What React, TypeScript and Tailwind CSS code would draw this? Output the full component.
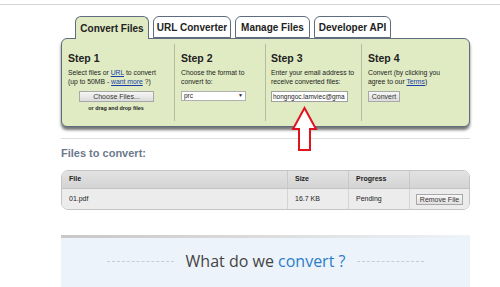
import React from "react";

const font = { fontFamily: "'Liberation Sans', Arial, sans-serif" };

function Tab({ label, active, w }: { label: string; active?: boolean; w: string }) {
  return (
    <div
      className={`${w} flex items-center justify-center rounded-t-[6px] border border-[#5d6d7e] text-[10px] font-bold text-[#222] ${
        active ? "bg-[#e0ebc3] border-b-0 relative z-10 h-[23px] -mb-[1px]" : "bg-white h-[22px]"
      }`}
    >
      {label}
    </div>
  );
}

export default function App() {
  return (
    <div className="w-[500px] h-[287px] bg-white overflow-hidden relative" style={font}>
      <div className="h-[5px] border-b border-[#d4d4d4]" />
      <div className="ml-[61px] w-[409px]">
        {/* tabs */}
        <div className="flex gap-[4px] pl-[14px] pt-[11px] items-end">
          <Tab label="Convert Files" active w="w-[74px]" />
          <Tab label="URL Converter" w="w-[78px]" />
          <Tab label="Manage Files" w="w-[75px]" />
          <Tab label="Developer API" w="w-[77px]" />
        </div>
        {/* panel */}
        <div className="h-[89px] bg-[#e0ebc3] border border-[#5d6d7e] rounded-[6px] shadow-[0_3px_3px_rgba(0,0,0,0.55)] flex py-[5px] text-[#222]">
          <div className="w-[113px] border-r border-[#b3bc9c] pl-[6px] pt-[8px]">
            <div className="text-[10.5px] font-bold leading-[12px]">Step 1</div>
            <div className="text-[6.8px] leading-[9px] mt-[4px] whitespace-nowrap">
              Select files or <span className="text-[#1a3fa8] underline">URL</span> to convert
              <br />
              (up to 50MB - <span className="text-[#1a3fa8] underline">want more</span> ?)
            </div>
            <div className="ml-[11px] mt-[5px] w-[75px] h-[11px] border border-[#a8a8a8] bg-gradient-to-b from-[#f6f6f6] to-[#dcdcdc] text-[7px] leading-[9px] text-center text-[#333]">
              Choose Files...
            </div>
            <div className="ml-[13px] mt-[3px] w-[70px] text-center text-[5.4px] font-bold leading-[7px] whitespace-nowrap">
              or drag and drop files
            </div>
          </div>
          <div className="w-[91px] border-r border-[#b3bc9c] pl-[6px] pt-[8px]">
            <div className="text-[10.5px] font-bold leading-[12px]">Step 2</div>
            <div className="text-[6.8px] leading-[9px] mt-[4px] whitespace-nowrap">
              Choose the format to
              <br />
              convert to:
            </div>
            <div className="mt-[5px] w-[65px] h-[10px] bg-white border border-[#b0b0b0] flex items-center justify-between px-[2px] text-[6.5px]">
              <span>prc</span>
              <span className="text-[5px]">▼</span>
            </div>
          </div>
          <div className="w-[96px] border-r border-[#b3bc9c] pl-[5px] pt-[8px]">
            <div className="text-[10.5px] font-bold leading-[12px]">Step 3</div>
            <div className="text-[6.8px] leading-[9px] mt-[4px] whitespace-nowrap">
              Enter your email address to
              <br />
              receive converted files:
            </div>
            <div className="mt-[5px] w-[77px] h-[11px] bg-white border border-[#a0a0a0] text-[6.5px] leading-[9px] px-[1px] overflow-hidden whitespace-nowrap">
              hongngoc.lamviec@gma
            </div>
          </div>
          <div className="pl-[6px] pt-[8px]">
            <div className="text-[10.5px] font-bold leading-[12px]">Step 4</div>
            <div className="text-[6.8px] leading-[9px] mt-[4px] whitespace-nowrap">
              Convert (by clicking you
              <br />
              agree to our <span className="text-[#1a3fa8] underline">Terms</span>)
            </div>
            <div className="mt-[5px] w-[32px] h-[11px] border border-[#a8a8a8] bg-gradient-to-b from-[#f6f6f6] to-[#dcdcdc] text-[7px] leading-[9px] text-center text-[#333]">
              Convert
            </div>
          </div>
        </div>
        <div className="mt-[11px] border-t border-[#dedede]" />
        <div className="mt-[7px] text-[11px] font-bold text-[#6c7a8c] leading-[14px]">Files to convert:</div>
        {/* table */}
        <div className="mt-[10px] border border-[#c4c4c4] rounded-[7px] overflow-hidden text-[7px] text-[#222]">
          <div className="flex h-[18px] bg-gradient-to-b from-[#e2e2e2] to-[#d4d4d4] border-b border-[#c4c4c4] font-bold items-stretch">
            <div className="w-[225px] pl-[7px] flex items-center">File</div>
            <div className="w-[61px] pl-[7px] flex items-center border-l border-[#c8c8c8]">Size</div>
            <div className="w-[61px] pl-[7px] flex items-center border-l border-[#c8c8c8]">Progress</div>
            <div className="flex-1 border-l border-[#c8c8c8]" />
          </div>
          <div className="flex h-[20px] bg-[#ececec] items-stretch">
            <div className="w-[225px] pl-[7px] flex items-center">01.pdf</div>
            <div className="w-[61px] pl-[7px] flex items-center border-l border-[#d4d4d4]">16.7 KB</div>
            <div className="w-[61px] pl-[7px] flex items-center border-l border-[#d4d4d4]">Pending</div>
            <div className="flex-1 border-l border-[#d4d4d4] flex items-center justify-center">
              <div className="w-[47px] h-[11px] border border-[#a8a8a8] bg-gradient-to-b from-[#f8f8f8] to-[#e0e0e0] text-[7px] leading-[9px] text-center text-[#333] whitespace-nowrap">
                Remove File
              </div>
            </div>
          </div>
        </div>
        {/* bottom */}
        <div className="mt-[25px] h-[60px] bg-[#edf3fa] relative">
          <div className="h-[3px] bg-gradient-to-r from-[#c8c8c8] via-[#dcdcdc] to-[#edf3fa]" />
          <div className="flex items-center justify-center pt-[12px] gap-[12px]">
            <div className="w-[67px] border-t border-dashed border-[#c6cdd4]" />
            <div className="text-[16px] leading-[22px] text-[#444]" style={{ fontFamily: "'Open Sans', 'DejaVu Sans', sans-serif" }}>
              What do we <span className="text-[#2b7dc9]">convert ?</span>
            </div>
            <div className="w-[67px] border-t border-dashed border-[#c6cdd4]" />
          </div>
        </div>
      </div>
      {/* red arrow */}
      <svg className="absolute left-[291px] top-[106px]" width="27" height="46" viewBox="0 0 27 46">
        <path d="M13.5 2 L25 23 L19 23 L19 44 L8 44 L8 23 L2 23 Z" fill="white" stroke="#e0141e" strokeWidth="2" strokeLinejoin="miter" />
      </svg>
    </div>
  );
}
